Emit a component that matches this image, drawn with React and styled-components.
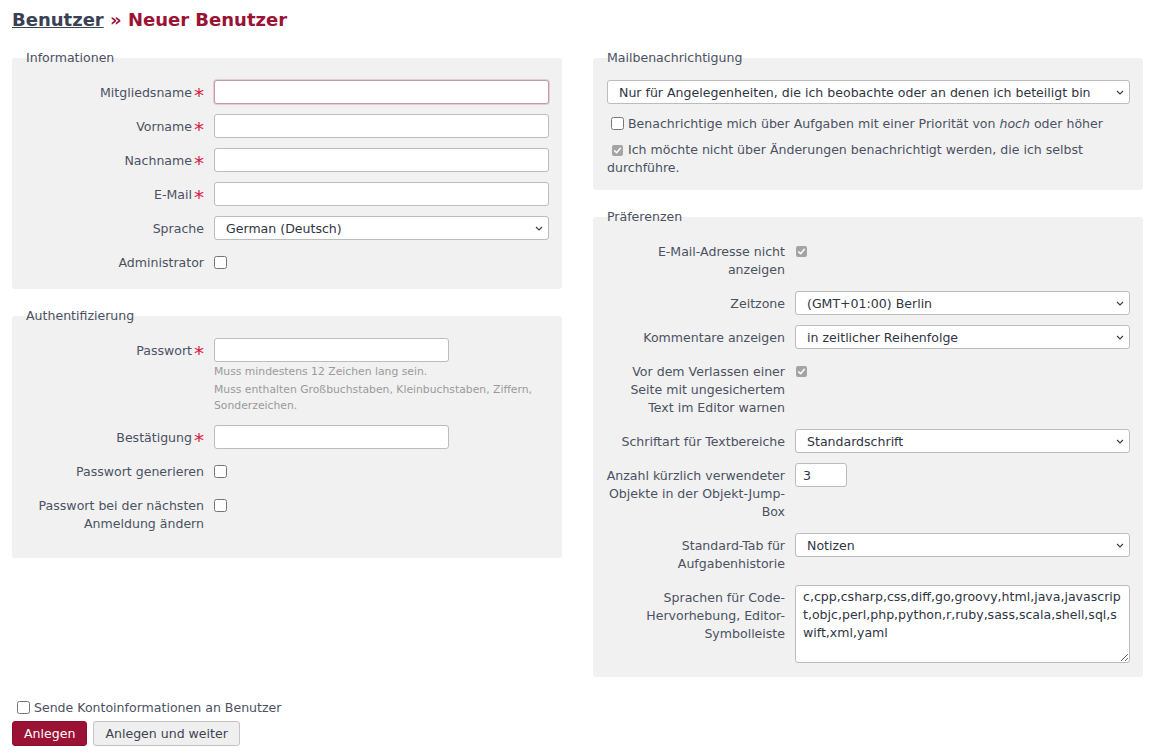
import React from "react";
import styled, { createGlobalStyle, css } from "styled-components";

const GlobalStyle = createGlobalStyle`
  html, body { margin: 0; padding: 0; background: #fff; }
  body {
    font-family: "DejaVu Sans", Verdana, sans-serif;
    font-size: 12.55px;
    color: #4b5162;
  }
  *, *::before, *::after { box-sizing: border-box; }
`;

const Page = styled.div`
  padding: 9px 19px 0 12px;
`;

const Title = styled.h2`
  margin: 0 0 19px;
  font-size: 18px;
  line-height: 21px;
  font-weight: bold;
  color: #9b1235;
`;

const TitleLink = styled.a`
  color: #3a4152;
  text-decoration: underline;
`;

const Columns = styled.div`
  display: grid;
  grid-template-columns: 1fr 1fr;
  column-gap: 31px;
  align-items: start;
`;

const Column = styled.div`
  display: flex;
  flex-direction: column;
  gap: 18px;
`;

const Box = styled.fieldset`
  margin: 0;
  border: 0;
  border-radius: 3px;
  background: #f1f1f1;
  padding: 13px 13px ${(p) => p.$pb ?? 14}px 12px;
  min-width: 0;
`;

const Legend = styled.legend`
  padding: 0 2px;
  line-height: 18px;
  color: #4b5162;
`;

const Rows = styled.div`
  display: flex;
  flex-direction: column;
  gap: 10px;
`;

const Row = styled.div`
  display: flex;
  align-items: flex-start;
  gap: 10px;
`;

const Label = styled.label`
  flex: 0 0 180px;
  text-align: right;
  padding: 4px 0 2px;
  line-height: 18px;
  color: #4b5162;
`;

const Req = styled.span`
  display: inline-block;
  font-size: 20px;
  line-height: 0;
  vertical-align: -5px;
  margin-left: 2px;
  color: #d81e45;
`;

const Field = styled.div`
  flex: 1;
  min-width: 0;
  display: flex;
  flex-direction: column;
  align-items: flex-start;
`;

const controlBase = css`
  height: 24px;
  border: 1px solid #bcbcbc;
  border-radius: 3px;
  background: #fff;
  font-family: inherit;
  font-size: 12.55px;
  color: #2f3542;
  outline: none;
`;

const TextInput = styled.input`
  ${controlBase};
  width: ${(p) => p.$w || "100%"};
  padding: 0 7px;
  ${(p) =>
    p.$focus &&
    css`
      border-color: #c49aa5;
      box-shadow: 0 0 0 1px #e6cdd3;
    `}
`;

const SelectWrap = styled.div`
  position: relative;
  width: 100%;
`;

const Select = styled.select`
  ${controlBase};
  appearance: none;
  -webkit-appearance: none;
  width: 100%;
  padding: 0 26px 0 11px;
  display: block;
`;

const Chevron = styled.svg`
  position: absolute;
  right: 6px;
  top: 10px;
  pointer-events: none;
`;

const TextArea = styled.textarea`
  width: 100%;
  height: 78px;
  border: 1px solid #bcbcbc;
  border-radius: 3px;
  background: #fff;
  font-family: inherit;
  font-size: 12.55px;
  line-height: 18px;
  color: #2f3542;
  padding: 2px 7px;
  outline: none;
  display: block;
`;

const Hint = styled.em`
  display: block;
  font-style: normal;
  font-size: 10.8px;
  line-height: 16px;
  color: #9a9a9a;
  margin-top: 1px;
  padding-top: 1px;
  &:last-child {
    margin-bottom: 1px;
  }
`;

const CheckCell = styled.div`
  height: 24px;
  display: flex;
  align-items: center;
`;

const Check = styled.input.attrs({ type: "checkbox" })`
  margin: 0;
  width: 13px;
  height: 13px;
`;

const CheckedBox = styled.span`
  display: inline-flex;
  align-items: center;
  justify-content: center;
  width: 11px;
  height: 11px;
  margin: ${(p) => (p.$inline ? "0 1px 0 5px" : "0 0 0 1px")};
  border-radius: 2px;
  background: #a4a4a4;
  vertical-align: -1px;
`;

const MailBody = styled.div`
  display: flex;
  flex-direction: column;
  padding-left: 2px;
`;

const MailSelectWrap = styled(SelectWrap)`
  margin-bottom: 6px;
`;

const CheckPara = styled.p`
  margin: 0;
  padding: 5px 0 3px;
  line-height: 18px;
  color: #4b5162;
`;

const InlineCheck = styled.input.attrs({ type: "checkbox" })`
  margin: 0 0 0 ${(p) => p.$ml ?? 4}px;
  width: 13px;
  height: 13px;
  vertical-align: -2px;
`;

const SendRow = styled.p`
  margin: 22px 0 0;
  line-height: 18px;
  color: #4b5162;
`;

const Buttons = styled.div`
  display: flex;
  gap: 6px;
  margin-top: 4px;
`;

const Button = styled.button`
  height: 25px;
  padding: 0 11px;
  font-family: inherit;
  font-size: 12.55px;
  border-radius: 3px;
  cursor: pointer;
  border: 1px solid ${(p) => (p.$primary ? "#8c0f2f" : "#c3c3c3")};
  background: ${(p) => (p.$primary ? "#9b1235" : "#efefef")};
  color: ${(p) => (p.$primary ? "#fff" : "#3d4351")};
`;

const ChevronIcon = () => (
  <Chevron width="8" height="5" viewBox="0 0 8 5">
    <path d="M1 1l3 3 3-3" fill="none" stroke="#3a3f4a" strokeWidth="1.2" />
  </Chevron>
);

const CheckedIcon = ({ inline }) => (
  <CheckedBox $inline={inline} role="checkbox" aria-checked="true">
    <svg width="9" height="9" viewBox="0 0 9 9">
      <path
        d="M1.6 4.7l2 2 3.8-4.4"
        fill="none"
        stroke="#fff"
        strokeWidth="1.5"
        strokeLinecap="round"
        strokeLinejoin="round"
      />
    </svg>
  </CheckedBox>
);

const Dropdown = ({ value }) => (
  <SelectWrap>
    <Select defaultValue={value}>
      <option value={value}>{value}</option>
    </Select>
    <ChevronIcon />
  </SelectWrap>
);

const FormRow = ({ label, required, children }) => (
  <Row>
    <Label>
      {label}
      {required && <Req>*</Req>}
    </Label>
    <Field>{children}</Field>
  </Row>
);

const CheckRow = ({ label, checked }) => (
  <Row>
    <Label>{label}</Label>
    <Field>
      <CheckCell>{checked ? <CheckedIcon /> : <Check />}</CheckCell>
    </Field>
  </Row>
);

const mailOption =
  "Nur für Angelegenheiten, die ich beobachte oder an denen ich beteiligt bin";

const languages =
  "c,cpp,csharp,css,diff,go,groovy,html,java,javascript,objc,perl,php,python,r,ruby,sass,scala,shell,sql,swift,xml,yaml";

export default function App() {
  return (
    <Page>
      <GlobalStyle />
      <Title>
        <TitleLink href="#">Benutzer</TitleLink> » Neuer Benutzer
      </Title>
      <Columns>
        <Column>
          <Box $pb={15}>
            <Legend>Informationen</Legend>
            <Rows>
              <FormRow label="Mitgliedsname" required>
                <TextInput $focus />
              </FormRow>
              <FormRow label="Vorname" required>
                <TextInput />
              </FormRow>
              <FormRow label="Nachname" required>
                <TextInput />
              </FormRow>
              <FormRow label="E-Mail" required>
                <TextInput />
              </FormRow>
              <FormRow label="Sprache">
                <Dropdown value="German (Deutsch)" />
              </FormRow>
              <CheckRow label="Administrator" />
            </Rows>
          </Box>
          <Box $pb={23}>
            <Legend>Authentifizierung</Legend>
            <Rows>
              <FormRow label="Passwort" required>
                <TextInput type="password" $w="235px" />
                <Hint>Muss mindestens 12 Zeichen lang sein.</Hint>
                <Hint>
                  Muss enthalten Großbuchstaben, Kleinbuchstaben, Ziffern,
                  Sonderzeichen.
                </Hint>
              </FormRow>
              <FormRow label="Bestätigung" required>
                <TextInput type="password" $w="235px" />
              </FormRow>
              <CheckRow label="Passwort generieren" />
              <CheckRow label="Passwort bei der nächsten Anmeldung ändern" />
            </Rows>
          </Box>
        </Column>
        <Column>
          <Box $pb={10}>
            <Legend>Mailbenachrichtigung</Legend>
            <MailBody>
              <MailSelectWrap>
                <Select defaultValue={mailOption}>
                  <option value={mailOption}>{mailOption}</option>
                </Select>
                <ChevronIcon />
              </MailSelectWrap>
              <CheckPara>
                <InlineCheck /> Benachrichtige mich über Aufgaben mit einer
                Priorität von <i>hoch</i> oder höher
              </CheckPara>
              <CheckPara>
                <CheckedIcon inline /> Ich möchte nicht über Änderungen
                benachrichtigt werden, die ich selbst durchführe.
              </CheckPara>
            </MailBody>
          </Box>
          <Box $pb={14}>
            <Legend>Präferenzen</Legend>
            <Rows>
              <CheckRow label="E-Mail-Adresse nicht anzeigen" checked />
              <FormRow label="Zeitzone">
                <Dropdown value="(GMT+01:00) Berlin" />
              </FormRow>
              <FormRow label="Kommentare anzeigen">
                <Dropdown value="in zeitlicher Reihenfolge" />
              </FormRow>
              <CheckRow
                label="Vor dem Verlassen einer Seite mit ungesichertem Text im Editor warnen"
                checked
              />
              <FormRow label="Schriftart für Textbereiche">
                <Dropdown value="Standardschrift" />
              </FormRow>
              <FormRow label="Anzahl kürzlich verwendeter Objekte in der Objekt-Jump-Box">
                <TextInput $w="52px" defaultValue="3" />
              </FormRow>
              <FormRow label="Standard-Tab für Aufgabenhistorie">
                <Dropdown value="Notizen" />
              </FormRow>
              <FormRow label="Sprachen für Code-Hervorhebung, Editor-Symbolleiste">
                <TextArea defaultValue={languages} />
              </FormRow>
            </Rows>
          </Box>
        </Column>
      </Columns>
      <SendRow>
        <InlineCheck $ml={5} /> Sende Kontoinformationen an Benutzer
      </SendRow>
      <Buttons>
        <Button $primary>Anlegen</Button>
        <Button>Anlegen und weiter</Button>
      </Buttons>
    </Page>
  );
}
